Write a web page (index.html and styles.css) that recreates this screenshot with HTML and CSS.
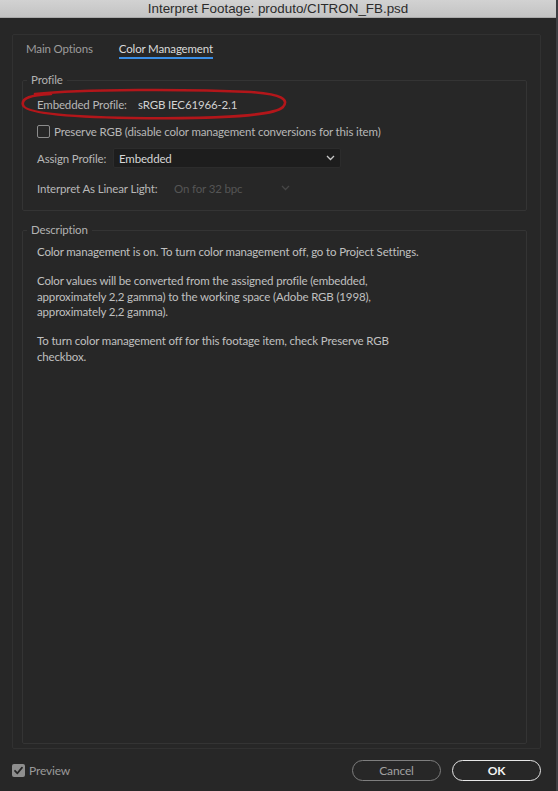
FILE: index.html
```html
<!DOCTYPE html>
<html>
<head>
<meta charset="utf-8">
<title>Interpret Footage</title>
<link rel="stylesheet" href="styles.css">
</head>
<body>
<div class="window">
  <div class="titlebar">Interpret Footage: produto/CITRON_FB.psd</div>
  <div class="panel">
    <div class="tabs">
      <div class="tab">Main Options</div>
      <div class="tab active">Color Management</div>
    </div>
    <fieldset class="group profile">
      <legend>Profile</legend>
      <div class="row">
        <span class="label w-embedded">Embedded Profile:</span>
        <span class="value">sRGB IEC61966-2.1</span>
      </div>
      <div class="row">
        <span class="checkbox"></span>
        <span class="label">Preserve RGB (disable color management conversions for this item)</span>
      </div>
      <div class="row">
        <span class="label w-assign">Assign Profile:</span>
        <div class="select">
          <span>Embedded</span>
          <svg class="chev" width="9" height="6" viewBox="0 0 9 6"><path d="M1 1 L4.5 4.5 L8 1" fill="none" stroke="#c8c8c8" stroke-width="1.3"/></svg>
        </div>
      </div>
      <div class="row">
        <span class="label w-linear">Interpret As Linear Light:</span>
        <div class="select disabled">
          <span>On for 32 bpc</span>
          <svg class="chev" width="9" height="6" viewBox="0 0 9 6"><path d="M1 1 L4.5 4.5 L8 1" fill="none" stroke="#464646" stroke-width="1.3"/></svg>
        </div>
      </div>
      <svg class="annotation" width="270" height="34" viewBox="0 0 270 34">
        <path d="M14 6 C60 1 170 1 230 4 C262 6 268 12 262 19 C252 29 180 31 110 30 C55 29 4 26 2 17 C0 10 10 7 30 6" fill="none" stroke="#b3161a" stroke-width="2.6" stroke-linecap="round"/>
      </svg>
    </fieldset>
    <fieldset class="group description">
      <legend>Description</legend>
      <p>Color management is on. To turn color management off, go to Project Settings.</p>
      <p>Color values will be converted from the assigned profile (embedded,<br>approximately 2,2 gamma) to the working space (Adobe RGB (1998),<br>approximately 2,2 gamma).</p>
      <p>To turn color management off for this footage item, check Preserve RGB<br>checkbox.</p>
    </fieldset>
  </div>
  <div class="footer">
    <div class="preview">
      <span class="checkbox checked">
        <svg width="13" height="13" viewBox="0 0 13 13"><path d="M3 6.8 L5.4 9.3 L10 3.6" fill="none" stroke="#262626" stroke-width="1.8" stroke-linecap="round" stroke-linejoin="round"/></svg>
      </span>
      <span class="preview-label">Preview</span>
    </div>
    <div class="buttons">
      <div class="btn cancel">Cancel</div>
      <div class="btn ok">OK</div>
    </div>
  </div>
</div>
</body>
</html>
```
FILE: styles.css
```css
html, body {
  margin: 0;
  padding: 0;
  background: #3e3e42;
}
.window {
  width: 556px;
  height: 791px;
  background: #272727;
  display: flex;
  flex-direction: column;
  font-family: "Lato", "Noto Sans", sans-serif;
  font-size: 11.5px;
  letter-spacing: -0.15px;
  color: #b9b9b9;
}
.titlebar {
  height: 18px;
  line-height: 18px;
  background: linear-gradient(#d2d2d2, #c3c3c3);
  border-bottom: 1px solid #a9a9a9;
  box-sizing: border-box;
  text-align: center;
  font-family: "Liberation Sans", Arial, sans-serif;
  font-size: 13.4px;
  letter-spacing: 0;
  color: #2b2b2b;
}
.panel {
  margin: 16px 15px 0 12px;
  height: 715px;
  box-sizing: border-box;
  border: 1px solid #313131;
  border-radius: 2px;
  display: flex;
  flex-direction: column;
}
.tabs {
  display: flex;
  gap: 26px;
  padding: 7px 0 0 13px;
}
.tab {
  line-height: 14px;
  padding-bottom: 1px;
  border-bottom: 2px solid transparent;
  color: #9c9c9c;
}
.tab.active {
  color: #dadada;
  border-bottom-color: #3a8ee6;
}
.group {
  margin: 0 13px 0 9px;
  padding: 7px 14px 12px 14px;
  border: 1px solid #343434;
  border-radius: 2px;
  min-width: 0;
}
.group legend {
  padding: 0 4px;
  margin-left: -10px;
  line-height: 14px;
  color: #b2b2b2;
}
.profile {
  margin-top: 14px;
  position: relative;
}
.row {
  display: flex;
  align-items: center;
  height: 20px;
  margin-bottom: 7px;
}
.row:nth-child(4) {
  margin-bottom: 10px;
}
.row:last-of-type {
  margin-bottom: 0;
}
.label {
  white-space: nowrap;
  color: #b7b7b7;
}
.w-embedded { width: 101px; }
.w-assign { width: 76px; }
.w-linear { width: 131px; }
.value {
  color: #d2d2d2;
}
.checkbox {
  width: 13px;
  height: 13px;
  box-sizing: border-box;
  border: 1.5px solid #8c8c8c;
  border-radius: 2px;
  margin-right: 4px;
  flex: none;
}
.checkbox.checked {
  border: none;
  background: #8e8e8e;
  display: flex;
}
.select {
  width: 228px;
  height: 20px;
  box-sizing: border-box;
  background: #1d1d1d;
  border: 1px solid #2c2c2c;
  border-radius: 2px;
  display: flex;
  align-items: center;
  justify-content: space-between;
  padding: 0 5px 0 5px;
  color: #d6d6d6;
}
.select.disabled {
  width: 128px;
  background: transparent;
  border-color: transparent;
  color: #555555;
}
.annotation {
  position: absolute;
  left: -2px;
  top: 1px;
  pointer-events: none;
}
.description {
  margin-top: 12px;
  margin-bottom: 4px;
  flex: 1;
}
.description p {
  margin: 0 0 13.5px 0;
  line-height: 15.5px;
  color: #c0c0c0;
}
.footer {
  height: 42px;
  display: flex;
  align-items: center;
  justify-content: space-between;
  padding: 0 15px 0 12px;
}
.preview {
  display: flex;
  align-items: center;
}
.preview-label {
  color: #9a9a9a;
  font-size: 12px;
}
.buttons {
  display: flex;
  gap: 11px;
}
.btn {
  width: 89px;
  height: 21px;
  box-sizing: border-box;
  border-radius: 11px;
  display: flex;
  align-items: center;
  justify-content: center;
  font-size: 12px;
}
.btn.cancel {
  border: 1.5px solid #7e7e7e;
  color: #a0a0a0;
}
.btn.ok {
  border: 1.5px solid #e6e6e6;
  color: #f2f2f2;
  font-weight: bold;
}
```
